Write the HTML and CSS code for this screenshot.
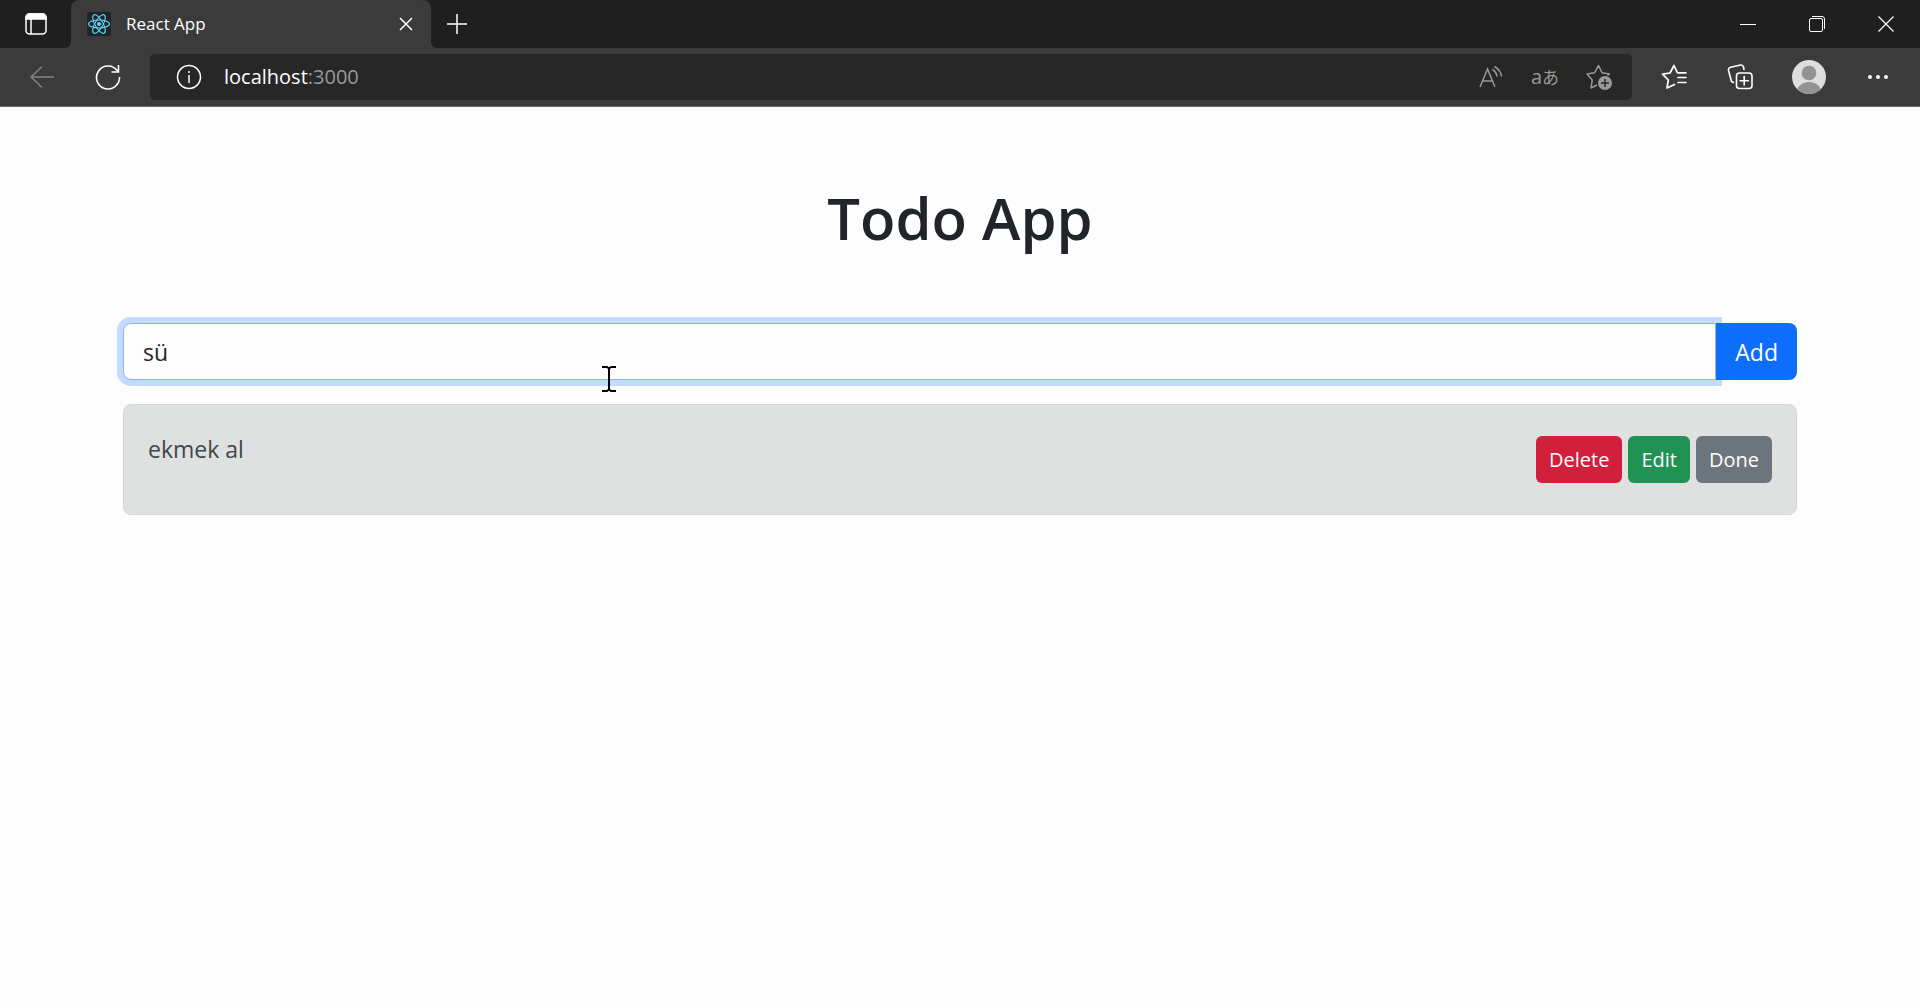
FILE: index.html
```
<!DOCTYPE html>
<html lang="en">
<head>
<meta charset="utf-8">
<title>React App</title>
<link rel="stylesheet" href="styles.css">
</head>
<body>
<header class="browser">
  <div class="tabbar">
    <button class="icon-btn tab-actions" aria-label="Tab actions">
      <svg width="24" height="24" viewBox="0 0 24 24" fill="none" stroke="currentColor" stroke-width="1.5"><rect x="2" y="2" width="20" height="20" rx="3.5"/><path d="M2 5.500a3.500 3.500 0 0 1 3.500-3.500h13a3.500 3.500 0 0 1 3.500 3.500v1.500h-20z" fill="currentColor"/><path d="M7 7v15"/></svg>
    </button>
    <div class="tab">
      <svg class="favicon" width="24" height="24" viewBox="0 0 24 24" fill="none" stroke="#61dafb" stroke-width="1.100"><rect width="24" height="24" rx="2" fill="#20232a" stroke="none"/><ellipse cx="12" cy="12" rx="10.500" ry="4"/><ellipse cx="12" cy="12" rx="10.500" ry="4" transform="rotate(60 12 12)"/><ellipse cx="12" cy="12" rx="10.500" ry="4" transform="rotate(120 12 12)"/><circle cx="12" cy="12" r="2" fill="#61dafb" stroke="none"/></svg>
      <span class="tab-title">React App</span>
      <button class="icon-btn" aria-label="Close tab"><svg width="14" height="14" viewBox="0 0 14 14" stroke="currentColor" stroke-width="1.500"><path d="M1 1l12 12M13 1L1 13"/></svg></button>
    </div>
    <div class="tabbar-rest">
      <button class="icon-btn new-tab" aria-label="New tab"><svg width="22" height="22" viewBox="0 0 22 22" stroke="currentColor" stroke-width="1.500"><path d="M11 1v20M1 11h20"/></svg></button>
      <div class="window-controls">
        <button class="icon-btn" aria-label="Minimize"><svg width="16" height="16" viewBox="0 0 16 16" stroke="currentColor"><path d="M0 8.500h16"/></svg></button>
        <button class="icon-btn" aria-label="Restore"><svg width="16" height="16" viewBox="0 0 16 16" fill="none" stroke="currentColor"><rect x=".5" y="2.500" width="13" height="13" rx="1.500"/><path d="M3 .5h10a2.500 2.500 0 0 1 2.500 2.500v10"/></svg></button>
        <button class="icon-btn" aria-label="Close"><svg width="16" height="16" viewBox="0 0 16 16" stroke="currentColor" stroke-width="1.200"><path d="M.5.5l15 15M15.500.5l-15 15"/></svg></button>
      </div>
    </div>
  </div>
  <div class="toolbar">
    <nav class="nav-buttons">
      <button class="icon-btn dim" aria-label="Back"><svg width="24" height="24" viewBox="0 0 24 24" fill="none" stroke="currentColor" stroke-width="1.400"><path d="M24 12H1M12 1.500L1 12l11 10.500"/></svg></button>
      <button class="icon-btn" aria-label="Refresh"><svg width="26" height="26" viewBox="0 0 26 26" fill="none" stroke="currentColor" stroke-width="1.600"><path d="M24.500 13A11.500 11.500 0 1 1 22.500 7M23.500 1v7H16.500"/></svg></button>
    </nav>
    <div class="address">
      <svg class="info" width="26" height="26" viewBox="0 0 26 26" fill="none" stroke="currentColor" stroke-width="1.500"><circle cx="13" cy="13" r="11.500"/><path d="M13 11v8"/><circle cx="13" cy="8" r="1" fill="currentColor" stroke="none"/></svg>
      <span class="url">localhost<span class="port">:3000</span></span>
      <div class="address-actions">
        <button class="icon-btn" aria-label="Read aloud"><svg width="24" height="24" viewBox="0 0 24 24" fill="none" stroke="currentColor" stroke-width="1.500"><path d="M1 22L8.500 4l7.500 18M3.500 16h10M13.500 4.500q4 2.500 4.500 7M15.500 1.500q6.500 4 7 10"/></svg></button>
        <button class="icon-btn translate" aria-label="Translate">a<span class="kana">あ</span></button>
        <button class="icon-btn" aria-label="Add to favorites"><svg width="26" height="26" viewBox="0 0 26 26" fill="none" stroke="currentColor" stroke-width="1.500" stroke-linejoin="round"><path d="M11 21l-6 3 1.200-8L1 10l7.500-1.200L12.500 1.500l3.500 7.300 7.500 1.200-2 1.500"/><circle cx="19" cy="19" r="7" fill="currentColor" stroke="none"/><path d="M19 15v8M15 19h8" stroke="#272727"/></svg></button>
      </div>
    </div>
    <div class="actions">
      <button class="icon-btn" aria-label="Favorites"><svg width="26" height="26" viewBox="0 0 26 26" fill="none" stroke="currentColor" stroke-width="1.700" stroke-linejoin="round" stroke-linecap="round"><path d="M13.500 20.500L6 24l1.300-8L1.500 10.200l7.500-1.200L13 1.500 16.500 8.800h8.500M17 13.500h8M17 18.500h8"/></svg></button>
      <button class="icon-btn" aria-label="Collections"><svg width="26" height="26" viewBox="0 0 26 26" fill="none" stroke="currentColor" stroke-width="1.600" stroke-linecap="round"><rect x="9.500" y="9" width="15.500" height="15.500" rx="3"/><path d="M17.200 12.500v8.500M13 16.800h8.500M6.500 18.500L4.500 17.500 1.500 6.500q-.5-2.500 2-3.200L13.500 1q2.500-.3 3 2L17 5.500"/></svg></button>
      <button class="icon-btn" aria-label="Profile"><svg width="34" height="34" viewBox="0 0 34 34"><defs><clipPath id="avatar"><circle cx="17" cy="17" r="17"/></clipPath></defs><g clip-path="url(#avatar)"><rect width="34" height="34" fill="#dedede"/><circle cx="17" cy="13" r="7.300" fill="#929292"/><ellipse cx="17" cy="33" rx="12.500" ry="11" fill="#929292"/></g></svg></button>
      <button class="icon-btn" aria-label="Settings and more"><svg width="20" height="6" viewBox="0 0 20 6" fill="currentColor"><circle cx="2" cy="3" r="2"/><circle cx="10" cy="3" r="2"/><circle cx="18" cy="3" r="2"/></svg></button>
    </div>
  </div>
</header>
<main class="container">
  <h1>Todo App</h1>
  <form class="input-group">
    <input class="todo-input" type="text" value="sü" aria-label="Todo">
    <button class="btn btn-add" type="button">Add</button>
  </form>
  <ul class="todos">
    <li class="todo">
      <span>ekmek al</span>
      <div class="todo-actions">
        <button class="btn btn-delete">Delete</button>
        <button class="btn btn-edit">Edit</button>
        <button class="btn btn-done">Done</button>
      </div>
    </li>
  </ul>
</main>
<svg class="cursor" width="14" height="26" viewBox="0 0 14 26" fill="none" stroke="#000" stroke-width="2"><path d="M0 1h5l2 1.500L9 1h5M7 2v22M0 25h5l2-1.500L9 25h5"/></svg>
</body>
</html>
```
FILE: styles.css
```
* { box-sizing: border-box; }
body {
  margin: 0;
  background: #fdfdfd;
  color: #212529;
  font: 23px/32px "Open Sans", sans-serif;
}
button, input { font: inherit; color: inherit; border: 0; }
.icon-btn {
  display: flex;
  align-items: center;
  justify-content: center;
  padding: 0;
  background: none;
}
.dim { color: #858585; }

.browser { background: #3b3b3b; color: #fff; border-bottom: 1px solid #6c6670; }
.tabbar { display: flex; height: 48px; background: linear-gradient(#1f1f1f 50%, #3b3b3b 50%); }
.tab-actions { width: 71px; background: #1f1f1f; border-radius: 0 0 6px 0; }
.tab {
  display: flex;
  align-items: center;
  width: 360px;
  padding: 0 18px 0 16px;
  background: #3b3b3b;
  border-radius: 8px 8px 0 0;
}
.tab-title { flex: 1; padding-left: 15px; font-size: 17px; }
.tabbar-rest { display: flex; flex: 1; background: #1f1f1f; border-radius: 0 0 0 6px; }
.new-tab { width: 52px; }
.window-controls { display: grid; grid-template-columns: repeat(3, 69px); margin-left: auto; }

.toolbar { display: flex; align-items: center; height: 58px; }
.nav-buttons { display: grid; grid-template-columns: 66px 66px; padding: 0 9px; }
.address {
  display: flex;
  flex: 1;
  align-items: center;
  gap: 22px;
  height: 46px;
  padding: 0 6px 0 26px;
  background: #272727;
  border-radius: 5px;
  color: #999;
}
.info { color: #fff; }
.url { flex: 1; color: #fff; font-size: 20px; }
.port { color: #999; }
.address-actions { display: grid; grid-template-columns: repeat(3, 54px); }
.translate { font: 20px/26px "Open Sans", sans-serif; }
.kana { font: 17px/26px "Noto Sans CJK JP", sans-serif; }
.actions { display: grid; grid-template-columns: 66px 66px 72px 66px; padding: 0 9px; }

.container { padding: 71px 123px; }
h1 { margin: 0 0 65px; font-size: 58px; line-height: 80px; font-weight: 600; text-align: center; }
.input-group { display: flex; height: 57px; margin: 0 0 24px; }
.todo-input {
  flex: 1;
  min-width: 0;
  padding: 0 19px;
  background: #fdfdfd;
  border: 1px solid #86b7fe;
  border-radius: 8px 0 0 8px;
  box-shadow: 0 0 0 6px #c2dbfe;
  outline: 0;
}
.btn { padding: 0 13px; color: #fff; border-radius: 6px; font-size: 20px; }
.btn-add { position: relative; padding: 0 19px; background: #0d6efd; border-radius: 0 8px 8px 0; font-size: 23px; }
.todos { margin: 0; padding: 0; list-style: none; }
.todo {
  display: flex;
  justify-content: space-between;
  padding: 31px 24px;
  background: #dfe1e1;
  border: 1px solid #d5d7d5;
  border-radius: 8px;
  color: #41464b;
  line-height: 26px;
}
.todo-actions { display: flex; gap: 6px; height: 47px; }
.btn-delete { background: #d21f3c; }
.btn-edit { background: #1f9254; }
.btn-done { background: #6c757d; }
.cursor { position: absolute; left: 602px; top: 366px; }
```
